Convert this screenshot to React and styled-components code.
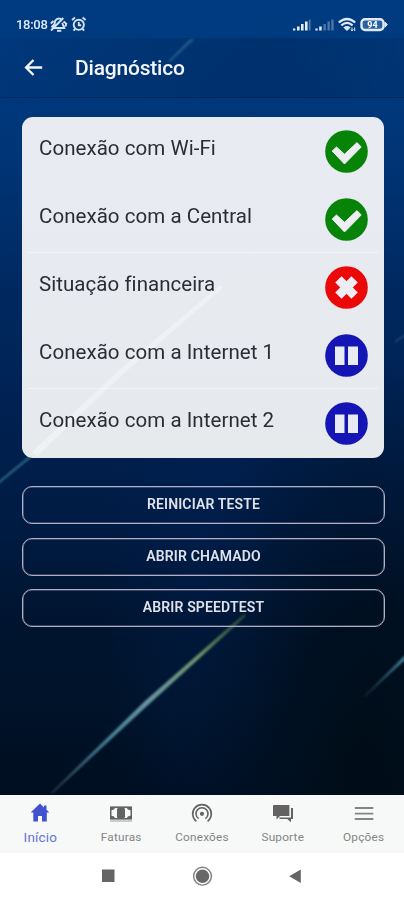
import styled, { createGlobalStyle } from 'styled-components';

const rows = [
    { label: 'Conexão com Wi-Fi', status: 'ok' },
    { label: 'Conexão com a Central', status: 'ok', line: true },
    { label: 'Situação financeira', status: 'error' },
    { label: 'Conexão com a Internet 1', status: 'paused', line: true },
    { label: 'Conexão com a Internet 2', status: 'paused' },
]

const tabs = [
    { label: 'Início', icon: 'home', active: true },
    { label: 'Faturas', icon: 'money' },
    { label: 'Conexões', icon: 'signal' },
    { label: 'Suporte', icon: 'chat' },
    { label: 'Opções', icon: 'menu' },
]

const colors = { ok: '#078407', error: '#eb0808', paused: '#1515b5' }

function StatusIcon({ status }) {
    return <svg width="43" height="43" viewBox="0 0 43 43">
        <circle cx="21.5" cy="21.5" r="21.3" fill={colors[status]} />
        {status === 'ok' && <path d="M7.2 21L11.5 17L19.5 24.3L32 12.6L36.2 17L19.5 34Z" fill="#eceef4" stroke="#eceef4" strokeWidth="1" strokeLinejoin="round" />}
        {status === 'error' && <path d="M13.4 13.4L29.6 29.6M29.6 13.4L13.4 29.6" stroke="#eceef4" strokeWidth="9" />}
        {status === 'paused' && <path d="M10 12.5h9.5v18.5h-9.5zM23 12.5h10v18.5h-10z" fill="#e8ebf3" />}
    </svg>
}

function TabIcon({ icon }) {
    return <svg width="24" height="22" viewBox="0 0 24 22" fill="currentColor">
        {icon === 'home' && <path d="M12 1.6L2.6 10.6H5.3V19.5H10V14H14V19.5H18.8V10.6H21.4L18.5 7.8V3.5H16V5.5Z" />}
        {icon === 'money' && <>
            <rect x="1" y="4.4" width="22" height="13.2" />
            <path d="M6 6H18Q18.3 8 21.5 8.3V13.7Q18.3 14 18 16H6Q5.7 14 2.5 13.7V8.3Q5.7 8 6 6Z" fill="#f7f8f8" />
            <rect x="8" y="5.5" width="8" height="11" rx="2" />
            <path d="M1 19H23" stroke="#bdbdbd" strokeWidth="1.5" />
        </>}
        {icon === 'signal' && <>
            <circle cx="12" cy="11.8" r="2.1" />
            <path d="M8.7 16.7A6 6 0 1 1 15.3 16.7M6.4 19.3A9.3 9.3 0 1 1 17.6 19.3" fill="none" stroke="currentColor" strokeWidth="1.6" />
        </>}
        {icon === 'chat' && <>
            <path d="M3 3H18.4V14H9L5.5 17.6V14H2V4Q2 3 3 3Z" />
            <path d="M20 6H22V17H20V20.2L16.2 17H8.5V15.5H20Z" />
        </>}
        {icon === 'menu' && <path d="M2.8 6H21.3M2.8 11.6H21.3M2.8 17H21.3" stroke="#858585" strokeWidth="1.9" />}
    </svg>
}

function StatusBar() {
    return <Status>
        <Clock>18:08</Clock>
        <svg width="40" height="18" viewBox="0 0 40 18" fill="none" stroke="#d5e2f2" strokeWidth="1.9">
            <path d="M2.5 12.2L5.5 9.3L6.2 5.8Q8.5 2.2 12 4M4.5 13H15.2L13.2 7.8M8 15.7H12.3M2 15.5L14.3 3M1.8 8.5L4.5 6M14.5 6.4L17.3 8.7L16.3 11.6" />
            <circle cx="29.8" cy="9.8" r="5.1" />
            <path d="M23 5L26 2.6M33.6 2.6L36.6 5M29.8 7V10.3H32.2M26 14L24.5 15.7M33.6 14L35.1 15.7" />
        </svg>
        <Space />
        <svg width="96" height="18" viewBox="0 0 96 18">
            <g fill="#e5ecf5">
                <path d="M1 13.5h2.3v2h-2.3zM5 11.5h2.6v4h-2.6zM9 9h2.6v6.5h-2.6zM13 6.5h2.6v9h-2.6z" />
                <path d="M16.8 4.5h1.8v11h-1.8z" opacity=".35" />
                <path d="M23.4 13.5h2.3v2h-2.3zM27.2 11.5h2.5v4h-2.5z" />
                <path d="M31.5 9h2.3v6.5h-2.3zM35.5 6.5h2.3v9h-2.3zM39.3 4.5h2.3v11h-2.3z" opacity=".35" />
            </g>
            <g fill="none" stroke="#e0e9f4">
                <path d="M46.8 7.5Q55 .5 63.2 7.5M49.4 10.4Q55 5.3 60.6 10.4" strokeWidth="2.3" />
                <path d="M51.4 12.5Q55 9.6 58.6 12.5L55 16Z" fill="#e0e9f4" strokeWidth="0" />
                <path d="M60 12.5V16M62.7 16V12.5M58.7 14.5L60 16L61.3 14.5" strokeWidth="1" />
                <rect x="69.5" y="4.2" width="22" height="10.8" rx="3.5" strokeWidth="2.4" fill="#2862a0" />
                <path d="M93 7L95.3 9.6L93 12.2Z" fill="#e0e9f4" />
            </g>
            <BatteryText x="80.5" y="12.8" textAnchor="middle">94</BatteryText>
        </svg>
    </Status>
}

// light trails behind the content
function Streaks() {
    return <Backdrop viewBox="0 0 404 795">
        <defs>
            <linearGradient id="green" gradientUnits="userSpaceOnUse" x1="52" y1="793" x2="246" y2="612">
                <stop offset="0" stopColor="#6791a5" stopOpacity=".3" />
                <stop offset=".3" stopColor="#47819a" />
                <stop offset=".5" stopColor="#6896a1" />
                <stop offset=".75" stopColor="#71956b" />
                <stop offset="1" stopColor="#568447" stopOpacity=".4" />
            </linearGradient>
            <linearGradient id="blue" gradientUnits="userSpaceOnUse" x1="364" y1="697" x2="404" y2="658">
                <stop offset="0" stopColor="#38566b" stopOpacity=".3" />
                <stop offset="1" stopColor="#427e95" />
            </linearGradient>
            <filter id="soft"><feGaussianBlur stdDeviation=".8" /></filter>
        </defs>
        <g filter="url(#soft)">
            <path d="M-2 483L30 457" stroke="#28617f" strokeWidth="2.5" />
            <path d="M50.5 793L145 701L244 614L246 616L148 705L53 793Z" fill="url(#green)" />
            <path d="M364 696L405 655L405 660L365 697Z" fill="url(#blue)" />
            <path d="M168 61L190 39L195 39L170 62Z" fill="#4f88b3" opacity=".6" />
            <path d="M395 342L405 335" stroke="#315f8f" strokeWidth="2" opacity=".6" />
        </g>
    </Backdrop>
}

// the long trail shining through the card
function CardGlow() {
    return <Glow width="362" height="341">
        <path d="M10 335L96 254L198 168L201 171L99 259L15 339Z" fill="#f8fafc" opacity=".5" />
    </Glow>
}

function App() {
    return <Phone>
        <GlobalStyle />
        <Screen>
            <Streaks />
            <StatusBar />
            <Header>
                <svg width="20" height="20" viewBox="0 0 20 20" fill="none" stroke="#f3f5fa" strokeWidth="2.4">
                    <path d="M18.2 9.5H3M9.5 2L2.1 9.5L9.5 17" />
                </svg>
                <Title>Diagnóstico</Title>
            </Header>
            <Card>
                <CardGlow />
                {rows.map((row) => <Row key={row.label} $line={row.line}>
                    <Label>{row.label}</Label>
                    <StatusIcon status={row.status} />
                </Row>)}
            </Card>
            <Actions>
                <Button>Reiniciar teste</Button>
                <Button>Abrir chamado</Button>
                <Button>Abrir speedtest</Button>
            </Actions>
        </Screen>
        <TabBar>
            {tabs.map((tab) => <Tab key={tab.label} $active={tab.active}>
                <TabIcon icon={tab.icon} />
                <span>{tab.label}</span>
            </Tab>)}
        </TabBar>
        <SystemNav>
            <svg width="14" height="22"><rect x="1" y="4.5" width="12.5" height="12.5" fill="#656565" /></svg>
            <svg width="22" height="22"><circle cx="11.5" cy="11.2" r="8.9" fill="none" stroke="#808080" strokeWidth="1.4" /><circle cx="11.5" cy="11.2" r="6.7" fill="#686868" /></svg>
            <svg width="14" height="22"><path d="M1.2 11.2L12.8 4.4V18Z" fill="#666" /></svg>
        </SystemNav>
    </Phone>
}

export default App;

const GlobalStyle = createGlobalStyle`
    * { box-sizing: border-box; }
    body {
        margin: 0;
        font-family: Roboto, sans-serif;
    }
    svg { display: block; flex-shrink: 0; }
`
const Phone = styled.div`
    width: 404px;
    height: 900px;
    display: flex;
    flex-direction: column;
    overflow: hidden;
    background: #fff;
`
const Screen = styled.main`
    position: relative;
    isolation: isolate;
    height: 794.5px;
    background:
        radial-gradient(ellipse at 90% 97%, #000d18 0%, rgba(0, 13, 24, 0) 38%),
        radial-gradient(ellipse at 58% 75%, rgba(0, 34, 90, .45) 0%, rgba(0, 20, 55, 0) 40%),
        linear-gradient(180deg, #003b81 0%, #003678 18%, #002961 36%, #00204f 54%, #001b43 66%, #00142f 78%, #001329 89%, #000e20 100%);
`
const Backdrop = styled.svg`
    position: absolute;
    inset: 0;
    z-index: -1;
    width: 404px;
    height: 795px;
`
const Status = styled.div`
    height: 38px;
    padding: 15px 16px 0;
    display: flex;
    align-items: flex-start;
`
const Clock = styled.span`
    width: 33px;
    color: #e0eaf5;
    font-size: 13px;
    line-height: 20px;
    font-weight: 500;
    letter-spacing: -.3px;
`
const Space = styled.span`
    flex: 1;
`
const BatteryText = styled.text`
    fill: #fff;
    font-size: 9px;
    font-weight: 700;
`
const Header = styled.header`
    height: 60px;
    padding-left: 24px;
    display: flex;
    align-items: center;
    gap: 31px;
    border-bottom: 1px solid rgba(0, 25, 70, .35);
    background: linear-gradient(90deg, rgba(0, 45, 100, .1), rgba(0, 35, 80, .35) 65%, rgba(0, 35, 80, .2));
`
const Title = styled.h1`
    margin: 0;
    color: #f4f6fb;
    font-size: 21px;
    line-height: 28px;
    font-weight: 550;
    letter-spacing: -.2px;
`
const Card = styled.section`
    position: relative;
    height: 341px;
    margin: 19px 20px 0 22px;
    border-radius: 11px;
    background: linear-gradient(#e8ebf2, #e6eaed);
`
const Glow = styled.svg`
    position: absolute;
    inset: 0;
`
const Row = styled.div`
    position: relative;
    height: 68px;
    padding: 1px 16.5px 0 17px;
    display: flex;
    justify-content: space-between;
    align-items: center;
    background: ${({ $line }) => $line ? 'linear-gradient(#f2f4f7, #f2f4f7) 6px 100% / 350px 1px no-repeat' : 'none'};
`
const Label = styled.span`
    padding-bottom: 7px;
    color: #2a2d33;
    font-size: 20.5px;
    line-height: 28px;
    font-weight: 400;
    letter-spacing: .05px;
`
const Actions = styled.div`
    margin: 28px 19px 0 22px;
    display: flex;
    flex-direction: column;
    gap: 13.5px;
`
const Button = styled.button`
    height: 38px;
    padding: 0 0 2px;
    border: 1px solid #b4afc4;
    border-radius: 10px;
    box-shadow: inset 0 0 0 .6px rgba(180, 175, 196, .6);
    background: transparent;
    color: #dfe2e9;
    font-family: inherit;
    font-size: 14px;
    font-weight: 600;
    letter-spacing: .15px;
    text-transform: uppercase;
`
const TabBar = styled.nav`
    height: 58.5px;
    display: grid;
    grid-template-columns: repeat(5, 1fr);
    background: #f7f8f8;
`
const Tab = styled.a`
    padding-top: 7.5px;
    display: flex;
    flex-direction: column;
    align-items: center;
    gap: 6px;
    color: ${({ $active }) => $active ? '#4052d0' : '#626262'};

    span {
        color: ${({ $active }) => $active ? '#6674d4' : '#858585'};
        font-size: ${({ $active }) => $active ? '13.5px' : '11.8px'};
        line-height: 15px;
        letter-spacing: .2px;
    }
`
const SystemNav = styled.div`
    height: 47px;
    padding: 12px 102px 0 101px;
    display: flex;
    justify-content: space-between;
    background: #fff;
`
